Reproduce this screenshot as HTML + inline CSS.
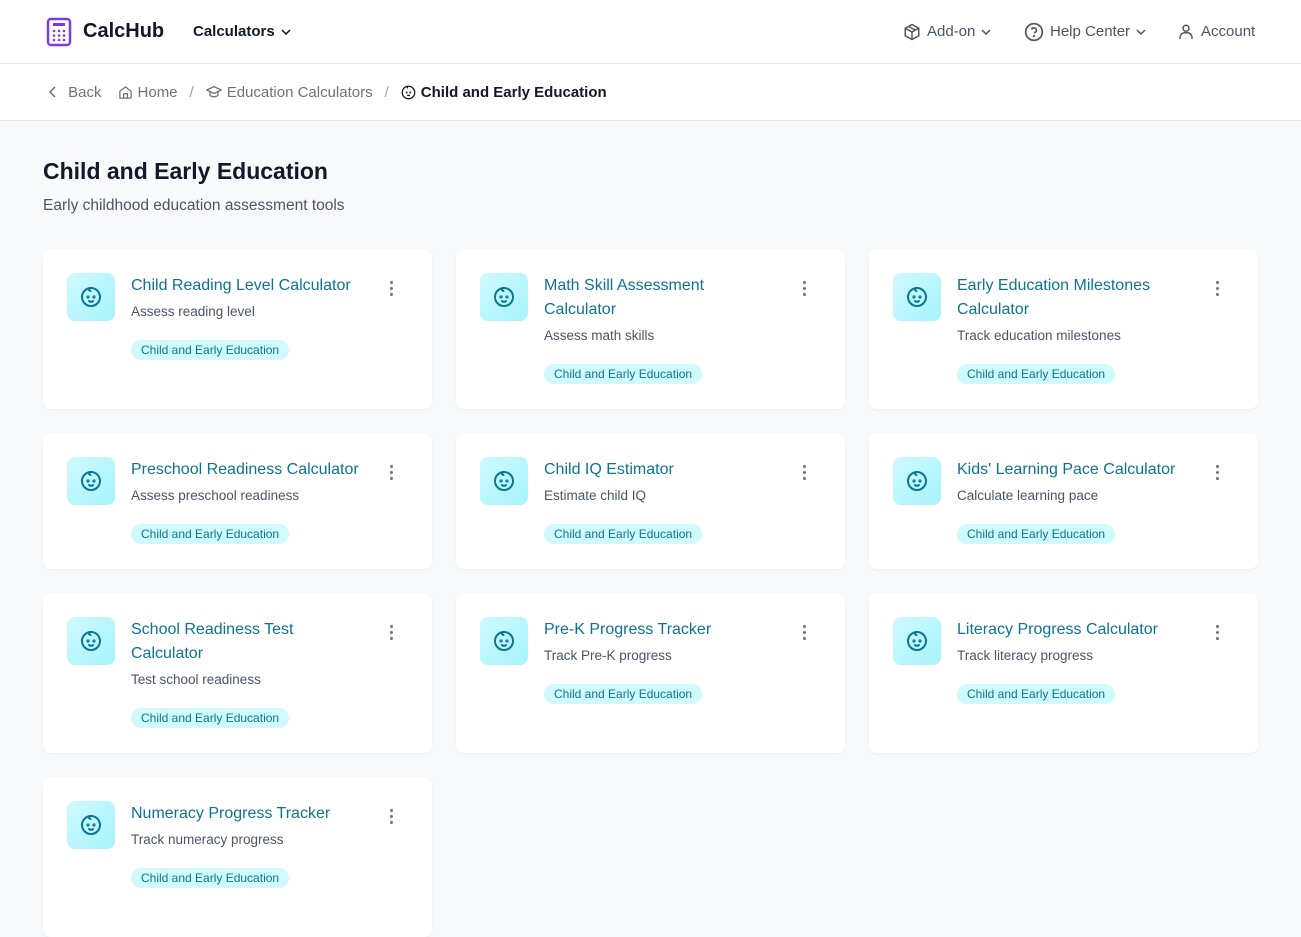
<!DOCTYPE html>
<html><head><meta charset="utf-8"><style>
*{box-sizing:border-box;margin:0;padding:0}
body{width:1301px;height:903px;overflow:hidden;background:#f8f9fb;font-family:"Liberation Sans",sans-serif;color:#111827}
.hdr{height:64px;background:#fff;border-bottom:1px solid #e5e7eb;position:relative}
.hdr>*{position:absolute;top:0;height:63px;display:flex;align-items:center}
.bc{height:57px;background:#fff;border-bottom:1px solid #e5e7eb;display:flex;align-items:center;padding-left:47px;font-size:15px;color:#6b7280}
.bc span{display:flex;align-items:center;gap:5px}
.sep{margin:0 12px;color:#9ca3af}
h1{position:absolute;left:43px;top:158px;font-size:23px;font-weight:bold}
.sub{position:absolute;left:43px;top:197px;font-size:15.5px;color:#4b5563}
.card{position:absolute;width:389px;background:#fff;border-radius:8px;box-shadow:0 1px 2px rgba(0,0,0,.05)}
.ic{position:absolute;left:24px;top:24px;width:48px;height:48px;border-radius:8px;background:linear-gradient(135deg,#cffafe,#a5f3fc);display:flex;align-items:center;justify-content:center}
.t{position:absolute;left:88px;top:25px;width:232px;font-size:16px;line-height:24px;color:#0e7490}
.t div.d{font-size:13.5px;color:#4b5563;line-height:24px;margin-top:2px}
.tag{display:inline-block;margin-top:16px;background:#cffafe;color:#0e7490;font-size:12px;line-height:20px;padding:0 10px;border-radius:10px}
.dots{position:absolute;left:347px;top:32px;width:4px}
.dots i{display:block;width:3px;height:3px;border-radius:50%;background:#6b7280;margin-bottom:3px}
</style></head><body>
<div class="hdr">
<div style="left:46px;gap:11px"><svg width="26" height="30" viewBox="0 0 26 30"><rect x="2" y="2" width="22" height="26" rx="3" fill="none" stroke="#7c3aed" stroke-width="2.5"/><rect x="7" y="6" width="12" height="3" fill="#7c3aed"/><g fill="#7c3aed"><circle cx="8" cy="14" r="1.3"/><circle cx="13" cy="14" r="1.3"/><circle cx="18" cy="14" r="1.3"/><circle cx="8" cy="18.5" r="1.3"/><circle cx="13" cy="18.5" r="1.3"/><circle cx="18" cy="18.5" r="1.3"/><circle cx="8" cy="23" r="1.3"/><circle cx="13" cy="23" r="1.3"/><circle cx="18" cy="23" r="1.3"/></g></svg><b style="font-size:20px">CalcHub</b></div>
<div style="left:193px;font-size:15px;gap:6px"><span style="font-weight:600">Calculators</span><svg width="10" height="6"><path d="M1 1l4 4 4-4" fill="none" stroke="#111" stroke-width="1.5"/></svg></div>
<div style="left:903px;font-size:15px;color:#4b5563;gap:6px"><svg width="18" height="18" viewBox="0 0 24 24" fill="none" stroke="#4b5563" stroke-width="2"><path d="M12 2l9 5v10l-9 5-9-5V7z M3 7l9 5 9-5 M12 12v10 M7.5 4.5l9 5"/></svg>Add-on<svg width="10" height="6"><path d="M1 1l4 4 4-4" fill="none" stroke="#4b5563" stroke-width="1.5"/></svg></div>
<div style="left:1024px;font-size:15px;color:#4b5563;gap:6px"><svg width="20" height="20" viewBox="0 0 24 24" fill="none" stroke="#4b5563" stroke-width="2"><circle cx="12" cy="12" r="10"/><path d="M9.1 9a3 3 0 0 1 5.8 1c0 2-3 3-3 3"/><circle cx="12" cy="17" r=".5"/></svg>Help Center<svg width="10" height="6"><path d="M1 1l4 4 4-4" fill="none" stroke="#4b5563" stroke-width="1.5"/></svg></div>
<div style="left:1177px;font-size:15px;color:#4b5563;gap:6px"><svg width="18" height="18" viewBox="0 0 24 24" fill="none" stroke="#4b5563" stroke-width="2"><circle cx="12" cy="7" r="4"/><path d="M4 21v-2a6 6 0 0 1 6-6h4a6 6 0 0 1 6 6v2"/></svg>Account</div>
</div>
<div class="bc"><span><svg width="12" height="12" viewBox="0 0 12 12"><path d="M8 1L3 6l5 5" fill="none" stroke="#6b7280" stroke-width="1.5"/></svg>&nbsp;Back</span><span style="margin-left:16px"><svg width="15" height="15" viewBox="0 0 24 24" fill="none" stroke="#6b7280" stroke-width="2"><path d="M3 10l9-7 9 7v11H3z M9 21v-7h6v7"/></svg>Home</span><span class="sep">/</span><span><svg width="16" height="14" viewBox="0 0 24 20" fill="none" stroke="#6b7280" stroke-width="2"><path d="M1 7l11-5 11 5-11 5z M6 9.5V15c3 3 9 3 12 0V9.5"/></svg>Education Calculators</span><span class="sep">/</span><span style="color:#111827;font-weight:bold"><svg width="15" height="15" viewBox="0 0 24 24" fill="none" stroke="#111" stroke-width="2"><circle cx="12" cy="12" r="10"/><circle cx="9" cy="12" r=".6"/><circle cx="15" cy="12" r=".6"/><path d="M10 16c1 1 3 1 4 0 M12 2c-2 0-3 2-1 3"/></svg>Child and Early Education</span></div>
<h1>Child and Early Education</h1>
<div class="sub">Early childhood education assessment tools</div>
<div id="g"></div>
<script>
const items=[["Child Reading Level Calculator","Assess reading level"],["Math Skill Assessment Calculator","Assess math skills"],["Early Education Milestones Calculator","Track education milestones"],["Preschool Readiness Calculator","Assess preschool readiness"],["Child IQ Estimator","Estimate child IQ"],["Kids' Learning Pace Calculator","Calculate learning pace"],["School Readiness Test Calculator","Test school readiness"],["Pre-K Progress Tracker","Track Pre-K progress"],["Literacy Progress Calculator","Track literacy progress"],["Numeracy Progress Tracker","Track numeracy progress"]];
const xs=[43,456,869],ys=[249,433,593,777],hs=[160,136,160,160];
const ic='<svg width="24" height="24" viewBox="0 0 24 24" fill="none" stroke="#0e7490" stroke-width="2" stroke-linecap="round"><circle cx="12" cy="12" r="9"/><circle cx="9" cy="12" r=".6"/><circle cx="15" cy="12" r=".6"/><path d="M10 16c1.2 1 2.8 1 4 0 M12 3c-2 0-3 2.5-.5 3"/></svg>';
let h='';items.forEach((it,i)=>{const r=Math.floor(i/3),c=i%3;
h+=`<div class="card" style="left:${xs[c]}px;top:${ys[r]}px;height:${hs[r]}px"><div class="ic">${ic}</div><div class="t">${it[0]}<div class="d">${it[1]}</div><span class="tag">Child and Early Education</span></div><div class="dots"><i></i><i></i><i></i></div></div>`});
document.getElementById('g').innerHTML=h;
</script>
</body></html>
